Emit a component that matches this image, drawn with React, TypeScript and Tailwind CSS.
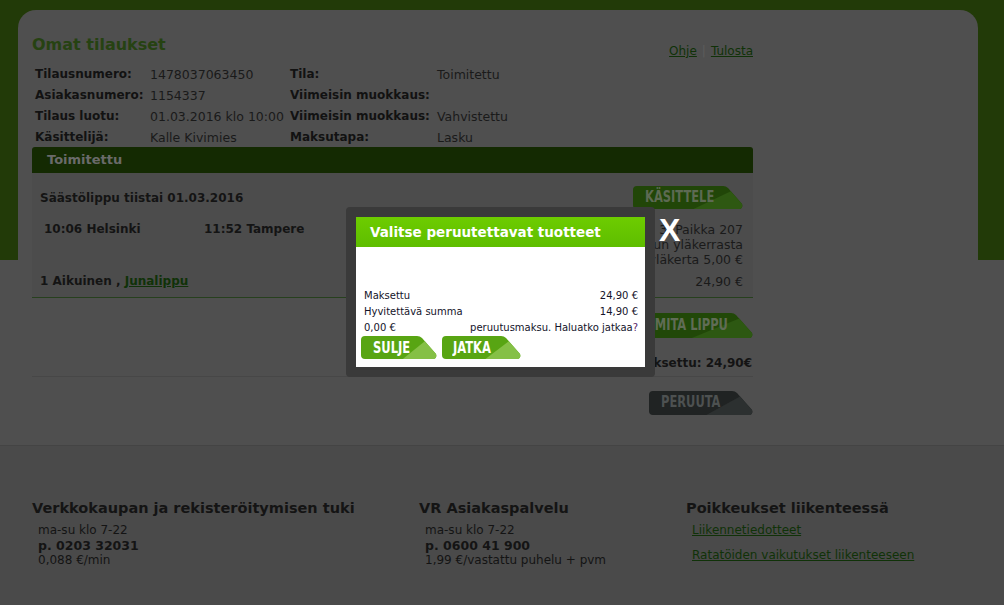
type BtnProps = {
  w: number
  h: number
  label: string
  base: string
  light: string
  className: string
  textClass: string
}

// slanted "tab" button used all over the order page
function SlantButton({ w, h, label, base, light, className, textClass }: BtnProps) {
  const s = Math.round(h * 0.8)
  const shape = `M4 0H${w - s - 2}Q${w - s + 1} 0 ${w - s + 3} 2L${w - 1} ${h - 5}Q${w + 0.5} ${h} ${w - 5} ${h}H4Q0 ${h} 0 ${h - 4}V4Q0 0 4 0Z`
  const px = w - s + 3 + (s - 4) * 0.2
  const py = 2 + (h - 7) * 0.2
  const hl = `M${w * 0.55} ${h}L${px} ${py}L${w - 1} ${h - 5}Q${w + 0.5} ${h} ${w - 5} ${h}Z`
  return (
    <div className={'relative flex shrink-0 items-center ' + className}>
      <svg className="absolute inset-0" width={w} height={h} viewBox={`0 0 ${w} ${h}`}>
        <path d={shape} fill={base} />
        <path d={hl} fill={light} />
      </svg>
      <span
        className={
          "relative origin-left whitespace-nowrap font-['DejaVu_Sans_Condensed','Liberation_Sans_Narrow',sans-serif] font-bold leading-none " +
          textClass
        }
      >
        {label}
      </span>
    </div>
  )
}

const info = [
  ['Tilausnumero:', '1478037063450', 'Tila:', 'Toimitettu'],
  ['Asiakasnumero:', '1154337', 'Viimeisin muokkaus:', ''],
  ['Tilaus luotu:', '01.03.2016 klo 10:00', 'Viimeisin muokkaus:', 'Vahvistettu'],
  ['Käsittelijä:', 'Kalle Kivimies', 'Maksutapa:', 'Lasku'],
]

export default function App() {
  return (
    <div className="relative h-[605px] w-[1004px] overflow-hidden bg-[linear-gradient(to_bottom,#223a08_0,#223a08_260px,#4f4f4f_260px)] font-['DejaVu_Sans',sans-serif] text-[#141414]">
      <div className="ml-[18px] mt-[10px] w-[960px] rounded-t-[18px] bg-[#4f4f4f] pb-[30px] pl-[14px] pt-[25px]">
        <div className="flex w-[721px] items-start justify-between">
          <h1 className="text-[16px] font-bold leading-[19px] text-[#264212]">Omat tilaukset</h1>
          <div className="mt-[8px] text-[12px] leading-[16px]">
            <a className="text-[#103208] underline">Ohje</a>
            <span className="mx-[5px] text-[#5c5c5c]">|</span>
            <a className="text-[#103208] underline">Tulosta</a>
          </div>
        </div>

        <div className="mt-[5px] grid grid-cols-[115px_140px_147px_1fr] pl-[3px] leading-[21px]">
          {info.map((r, i) => (
            <div key={i} className="contents">
              <span className="text-[12px] font-bold text-[#121212]">{r[0]}</span>
              <span className="text-[12.5px] text-[#1a1a1a]">{r[1]}</span>
              <span className="text-[12px] font-bold text-[#121212]">{r[2]}</span>
              <span className="text-[12.5px] text-[#1a1a1a]">{r[3]}</span>
            </div>
          ))}
        </div>

        <div className="-mt-[1px] flex h-[26px] w-[721px] items-center rounded-t-[3px] bg-[#142a02] pl-[15px] text-[13px] font-bold text-[#6a6a6a]">
          Toimitettu
        </div>

        <div className="w-[721px] border-b border-[#27401e] bg-[#4c4c4c] pb-[8px] pl-[8px] pr-[10px] pt-[13px]">
          <div className="flex items-center justify-between">
            <span className="text-[12px] font-bold leading-[16px]">Säästölippu tiistai 01.03.2016</span>
            <SlantButton
              w={110}
              h={23}
              label="KÄSITTELE"
              base="#214608"
              light="#2e5812"
              className="h-[23px] w-[110px] pl-[12px]"
              textClass="text-[15px] scale-x-[0.85] text-[#5d6a53]"
            />
          </div>
          <div className="mt-[12.5px] flex items-start leading-[15px]">
            <span className="w-[164px] pl-[4px] text-[12px] font-bold">10:06 Helsinki</span>
            <span className="text-[12px] font-bold">11:52 Tampere</span>
            <div className="flex-1 text-right text-[12.5px] text-[#1a1a1a]">
              <div>Vaunu 3, Paikka 207</div>
              <div>Ravintolavaunun yläkerrasta</div>
              <div>Ravintolavaunun yläkerta 5,00 €</div>
            </div>
          </div>
          <div className="mt-[7px] flex items-center justify-between leading-[15px]">
            <span className="text-[12px] font-bold">
              1 Aikuinen , <a className="text-[#103208] underline">Junalippu</a>
            </span>
            <span className="text-[12.5px] text-[#1a1a1a]">24,90 €</span>
          </div>
        </div>

        <div className="mt-[15px] flex w-[721px] justify-end">
          <SlantButton
            w={136}
            h={25}
            label="TOIMITA LIPPU"
            base="#214808"
            light="#2d5812"
            className="h-[25px] w-[136px] pl-[16px]"
            textClass="text-[15px] scale-x-[0.85] text-[#606c56]"
          />
        </div>

        <div className="mt-[17px] w-[720px] text-right text-[12px] font-bold leading-[16px]">Maksettu: 24,90€</div>

        <div className="mt-[5px] w-[721px] border-t border-[#474747]" />

        <div className="mt-[14px] flex w-[721px] justify-end">
          <SlantButton
            w={104}
            h={24}
            label="PERUUTA"
            base="#202323"
            light="#2c3030"
            className="h-[24px] w-[104px] pl-[12px]"
            textClass="text-[15px] scale-x-[0.85] text-[#4d5151]"
          />
        </div>
      </div>

      <footer className="flex border-t border-[#444444] bg-[#4a4a4a] pb-[60px] pl-[32px] pt-[53px] text-[#141414]">
        <div className="w-[387px]">
          <h2 className="text-[14.5px] font-bold leading-[18px]">Verkkokaupan ja rekisteröitymisen tuki</h2>
          <div className="mt-[6px] pl-[6px] text-[12px] leading-[15px]">
            <div>ma-su klo 7-22</div>
            <div className="text-[12.5px] font-bold">p. 0203 32031</div>
            <div>0,088 €/min</div>
          </div>
        </div>
        <div className="w-[267px]">
          <h2 className="text-[14.5px] font-bold leading-[18px]">VR Asiakaspalvelu</h2>
          <div className="mt-[6px] pl-[6px] text-[12px] leading-[15px]">
            <div>ma-su klo 7-22</div>
            <div className="text-[12.5px] font-bold">p. 0600 41 900</div>
            <div>1,99 €/vastattu puhelu + pvm</div>
          </div>
        </div>
        <div>
          <h2 className="text-[14.5px] font-bold leading-[18px]">Poikkeukset liikenteessä</h2>
          <div className="mt-[6px] flex flex-col items-start gap-[10px] pl-[6px] text-[12px] leading-[15px]">
            <a className="text-[#103208] underline">Liikennetiedotteet</a>
            <a className="text-[#103208] underline">Ratatöiden vaikutukset liikenteeseen</a>
          </div>
        </div>
      </footer>

      {/* cancel dialog */}
      <div className="absolute left-[346px] top-[207px] h-[170px] w-[309px] rounded-[4px] bg-[#3a3a3a] p-[10px]">
        <div className="flex h-[150px] flex-col bg-white">
          <div className="h-[30px] bg-[linear-gradient(#6dcc00,#5ebd00)] pl-[14px] text-[13.5px] font-bold leading-[30px] text-white">
            Valitse peruutettavat tuotteet
          </div>
          <div className="pl-[8px] pr-[7px] pt-[41px] text-[10px] leading-[16px] text-[#14142a]">
            <div className="flex justify-between">
              <span>Maksettu</span>
              <span>24,90 €</span>
            </div>
            <div className="flex justify-between">
              <span>Hyvitettävä summa</span>
              <span>14,90 €</span>
            </div>
            <div className="flex justify-between">
              <span>0,00 €</span>
              <span>
                peruutusmaksu. Haluatko jatkaa<span className="text-[#5a1f6a]">?</span>
              </span>
            </div>
            <div className="-ml-[3px] flex gap-[5px]">
              <SlantButton
                w={76}
                h={23}
                label="SULJE"
                base="#58a513"
                light="#85c046"
                className="h-[23px] w-[76px] pl-[12px]"
                textClass="text-[16px] scale-x-[0.8] text-white"
              />
              <SlantButton
                w={79}
                h={23}
                label="JATKA"
                base="#58a513"
                light="#85c046"
                className="h-[23px] w-[79px] pl-[11px]"
                textClass="text-[16px] scale-x-[0.8] text-white"
              />
            </div>
          </div>
        </div>
      </div>
      <span className="absolute left-[659px] top-[214px] font-['Liberation_Sans',sans-serif] text-[32px] font-bold leading-[32px] text-white">
        X
      </span>
    </div>
  )
}
